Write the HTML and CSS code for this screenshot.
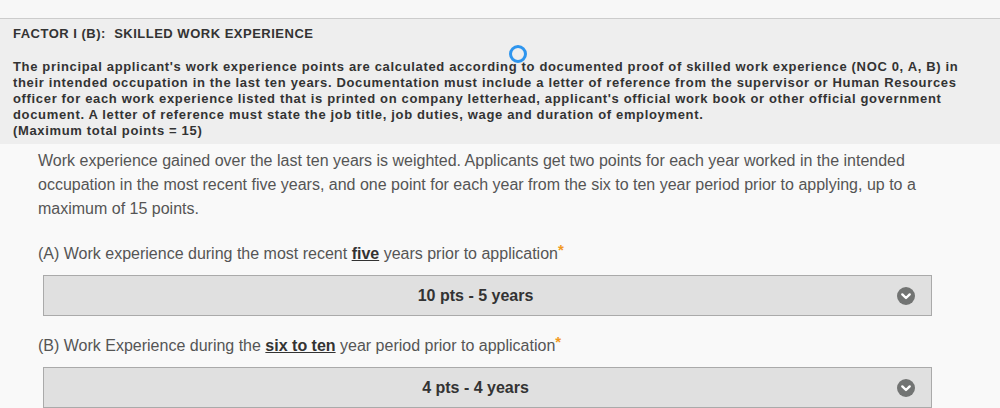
FILE: index.html
```html
<!DOCTYPE html>
<html>
<head>
<meta charset="utf-8">
<link rel="stylesheet" href="styles.css">
</head>
<body>
<div class="topbar"></div>
<section class="panel">
  <h2 class="panel-title">FACTOR I (B):&nbsp; SKILLED WORK EXPERIENCE</h2>
  <p class="panel-text">The principal applicant's work experience points are calculated according to documented proof of skilled work experience (NOC 0, A, B) in their intended occupation in the last ten years. Documentation must include a letter of reference from the supervisor or Human Resources officer for each work experience listed that is printed on company letterhead, applicant's official work book or other official government document. A letter of reference must state the job title, job duties, wage and duration of employment.<br>(Maximum total points = 15)</p>
  <span class="cursor-ring"></span>
</section>
<main class="content">
  <p class="intro">Work experience gained over the last ten years is weighted. Applicants get two points for each year worked in the intended occupation in the most recent five years, and one point for each year from the six to ten year period prior to applying, up to a maximum of 15 points.</p>
  <div class="field">
    <label class="field-label">(A) Work experience during the most recent <strong>five</strong> years prior to application<sup class="req">*</sup></label>
    <div class="select">
      <span class="select-value">10 pts - 5 years</span>
      <svg class="select-icon" width="18" height="18" viewBox="0 0 18 18"><circle cx="9" cy="9" r="9" fill="#727473"/><path d="M5.3 7.4 L9 11 L12.7 7.4" fill="none" stroke="#fff" stroke-width="2.4" stroke-linecap="round" stroke-linejoin="round"/></svg>
    </div>
  </div>
  <div class="field">
    <label class="field-label">(B) Work Experience during the <strong>six to ten</strong> year period prior to application<sup class="req">*</sup></label>
    <div class="select">
      <span class="select-value">4 pts - 4 years</span>
      <svg class="select-icon" width="18" height="18" viewBox="0 0 18 18"><circle cx="9" cy="9" r="9" fill="#727473"/><path d="M5.3 7.4 L9 11 L12.7 7.4" fill="none" stroke="#fff" stroke-width="2.4" stroke-linecap="round" stroke-linejoin="round"/></svg>
    </div>
  </div>
</main>
</body>
</html>
```
FILE: styles.css
```css
html, body {
  margin: 0;
  padding: 0;
  background: #f9f9f9;
  font-family: "Liberation Sans", Arial, sans-serif;
}
.topbar {
  height: 18px;
  background: #f7f7f7;
}
.panel {
  position: relative;
  background: #eeeeee;
  border-top: 1px solid #cccccc;
  padding: 7px 13px 5px 13px;
  color: #333333;
}
.panel-title {
  margin: 0 0 17px 0;
  font-size: 13px;
  line-height: 16px;
  font-weight: bold;
  letter-spacing: 0.5px;
}
.panel-text {
  margin: 0;
  font-size: 13px;
  line-height: 16px;
  font-weight: bold;
  letter-spacing: 0.66px;
}
.cursor-ring {
  position: absolute;
  left: 509px;
  top: 26px;
  width: 12px;
  height: 12px;
  border: 3px solid #2e95ee;
  border-radius: 50%;
}
.content {
  padding: 5px 0 0 38px;
  color: #555555;
}
.intro {
  margin: 0;
  font-size: 16px;
  line-height: 24px;
  width: 900px;
}
.field {
  margin-top: 21px;
}
.field + .field {
  margin-top: 18px;
}
.field-label {
  display: block;
  font-size: 16px;
  line-height: 24px;
}
.field-label strong {
  color: #333333;
  text-decoration: underline;
}
.req {
  color: #f29a1f;
  font-size: 15px;
  font-weight: bold;
  line-height: 0;
  vertical-align: 4px;
}
.select {
  margin: 9px 0 0 5px;
  width: 887px;
  height: 39px;
  background: #e0e0e0;
  border: 1px solid #aaaaaa;
  display: flex;
  align-items: center;
  position: relative;
}
.select-value {
  flex: 1;
  text-align: center;
  padding-left: 10px;
  font-size: 16px;
  font-weight: bold;
  color: #333333;
}
.select-icon {
  margin-right: 16px;
}
```
